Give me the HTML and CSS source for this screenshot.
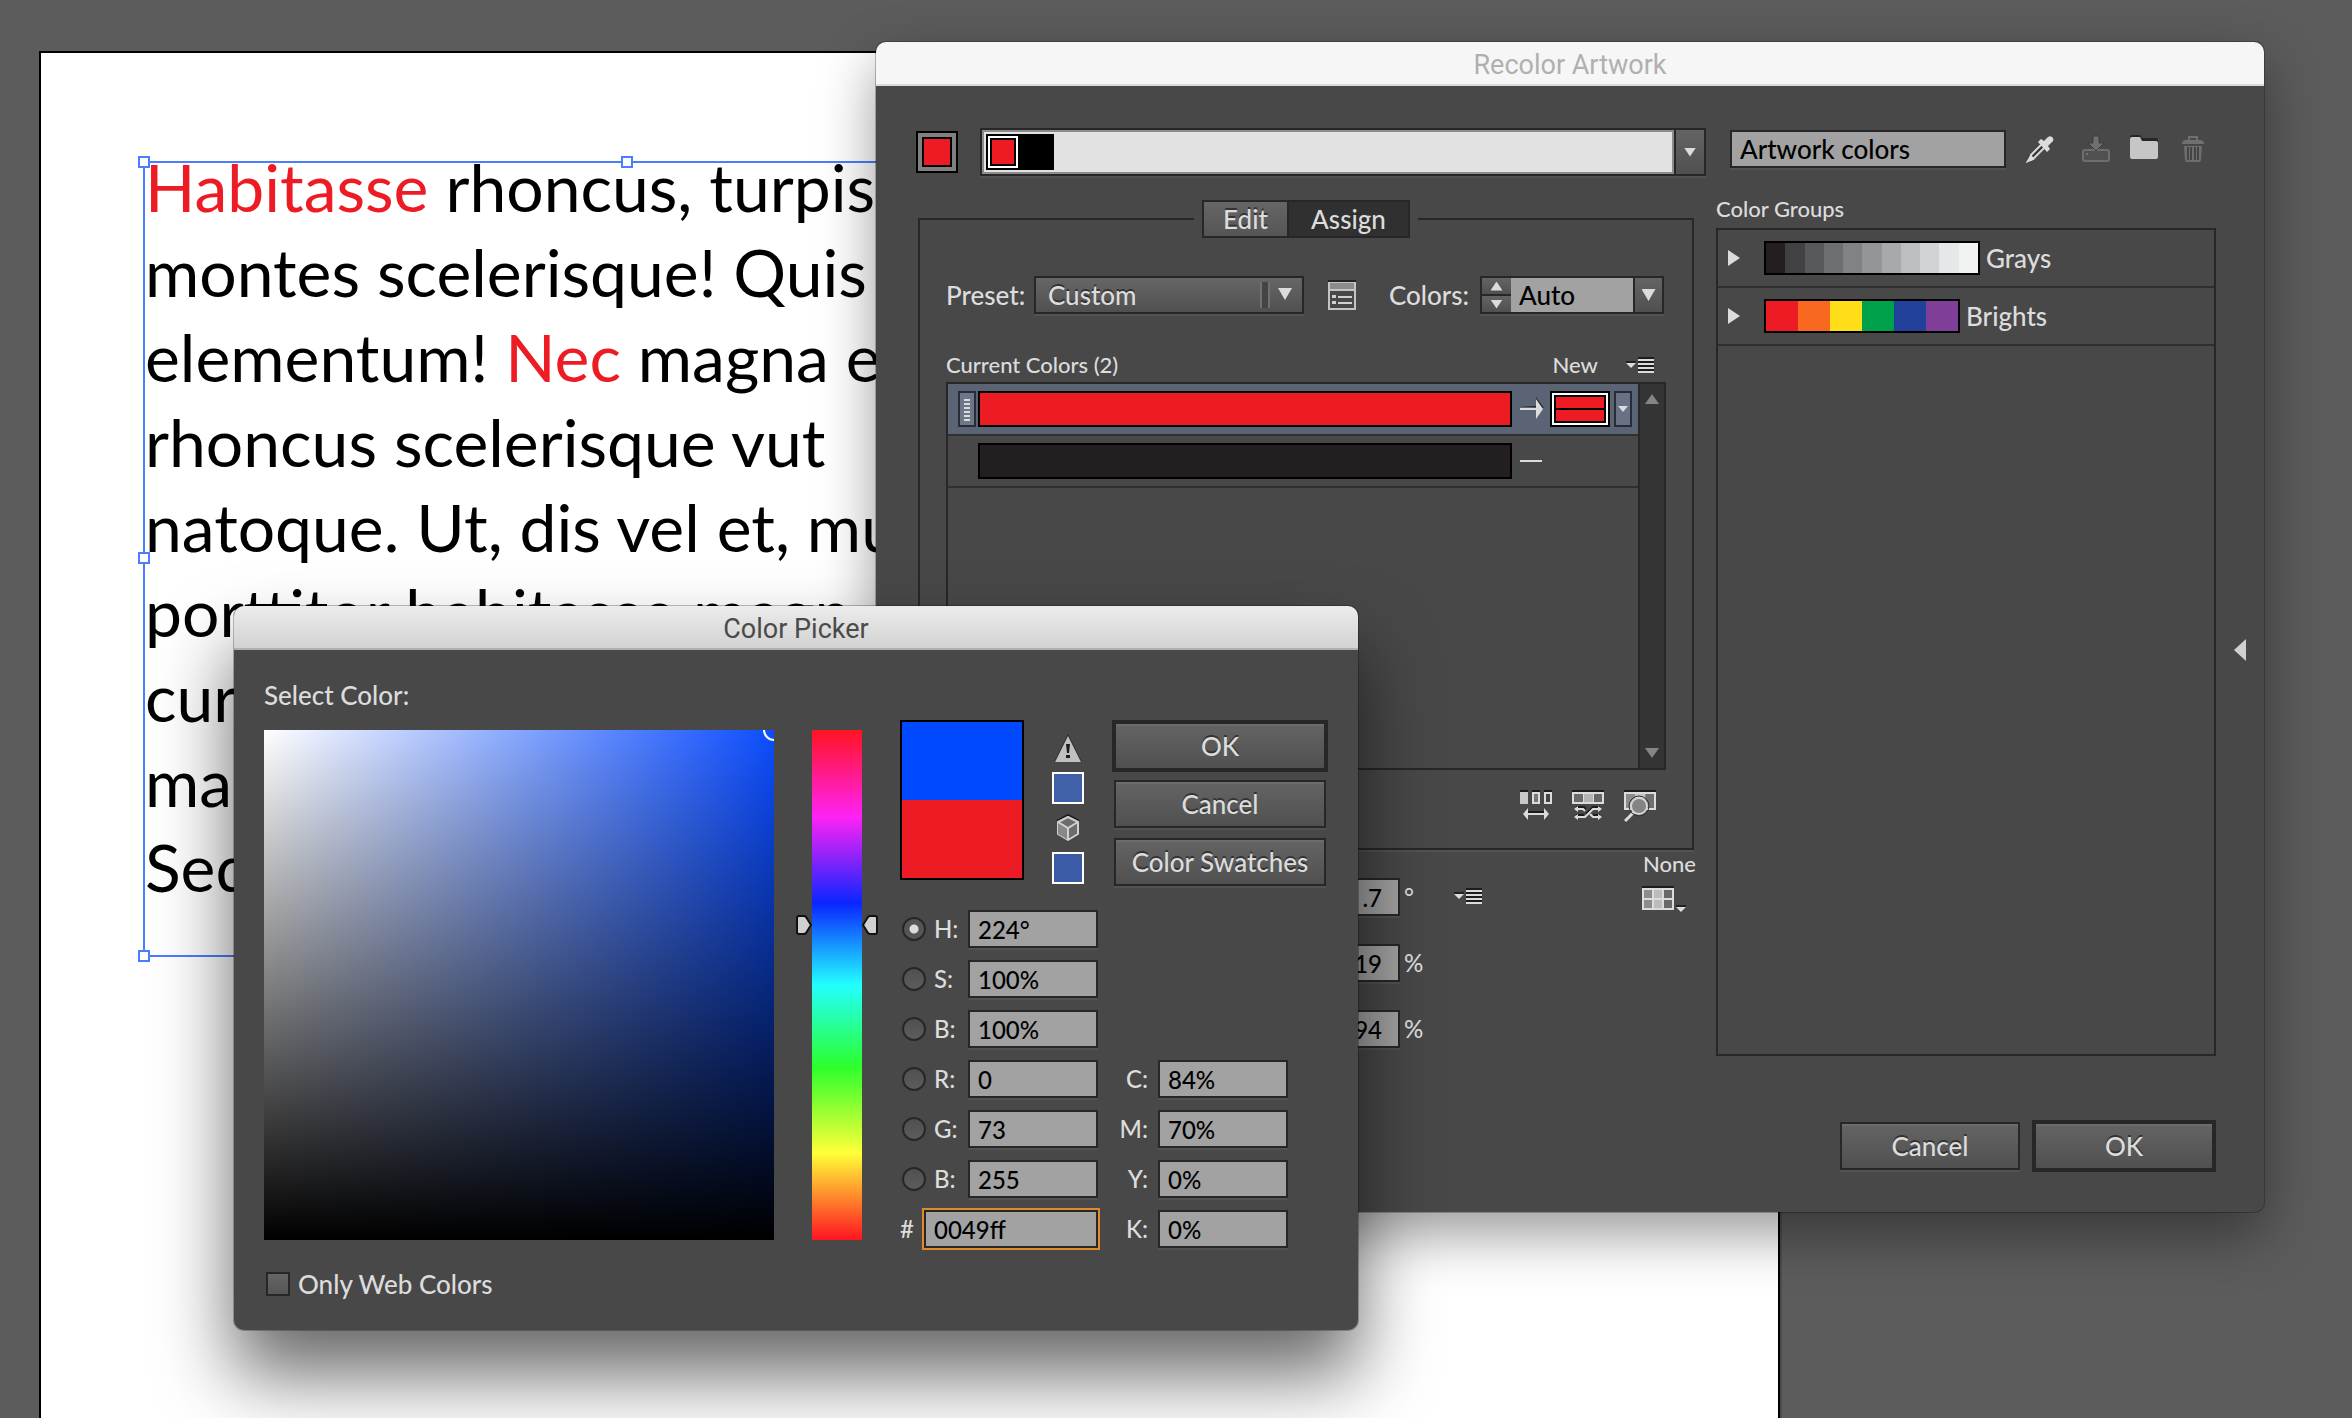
FILE: index.html
```html
<!DOCTYPE html>
<html lang="en">
<head>
    <meta charset="UTF-8">
    <meta name="viewport" content="width=device-width, initial-scale=1.0">
    <title>Recolor Artwork</title>
    <link rel="stylesheet" href="styles.css">
</head>
<body>
    <main class="workspace">
        <div class="artboard"></div>
        <div class="text-frame">
            <p><span class="red">Habitasse</span> rhoncus, turpis<br>
            montes scelerisque! Quis<br>
            elementum! <span class="red">Nec</span> magna e<br>
            rhoncus scelerisque vut<br>
            natoque. Ut, dis vel et, mu<br>
            porttitor habitasse magn<br>
            cur<br>
            ma<br>
            Sed</p>
            <i class="handle top-left"></i>
            <i class="handle top-mid"></i>
            <i class="handle mid-left"></i>
            <i class="handle bottom-left"></i>
        </div>

        <!-- Recolor Artwork -->
        <section class="window recolor">
            <h2 class="titlebar">Recolor Artwork</h2>
            <div class="recolor-body">
                <div class="left-col">
                    <div class="active-row">
                        <button class="base-color" aria-label="Base color"><span></span></button>
                        <div class="color-bar">
                            <div class="bar-track">
                                <span class="chip chip-active"></span><span class="chip"></span>
                            </div>
                            <button class="bar-btn" aria-label="Harmony rules"><i class="tri-down small"></i></button>
                        </div>
                    </div>

                    <fieldset class="assign">
                        <legend>
                            <span class="tabs">
                                <button class="tab">Edit</button><button class="tab active">Assign</button>
                            </span>
                        </legend>
                        <div class="preset-row">
                            <label class="preset-label" for="preset">Preset:</label>
                            <span class="select-wrap">
                                <select id="preset"><option>Custom</option></select>
                            </span>
                            <button class="icon-btn preset-options" aria-label="Preset options">
                                <svg width="28" height="30" viewBox="0 0 28 30">
                                    <path d="M0 0h28v2H0z" fill="#222"/>
                                    <path d="M1 3h26v26H1z" fill="#484848" stroke="#c4c4c4" stroke-width="2"/>
                                    <path d="M2 3h24v6H2z" fill="#8c8c8c"/>
                                    <path d="M1 10h26" stroke="#c4c4c4" stroke-width="2"/>
                                    <path d="M4 15h4v3H4zM4 21h4v3H4zM10 16h14v2H10zM10 22h14v2H10z" fill="#d0d0d0"/>
                                </svg>
                            </button>
                            <label class="colors-label" for="colors">Colors:</label>
                            <span class="stepper">
                                <span class="steps">
                                    <button aria-label="More"><i class="tri-up"></i></button>
                                    <button aria-label="Fewer"><i class="tri-down small"></i></button>
                                </span>
                                <input type="text" id="colors" value="Auto">
                                <button class="drop" aria-label="Color count"><i class="tri-down big"></i></button>
                            </span>
                        </div>

                        <div class="list-head">
                            <span>Current Colors (2)</span>
                            <span class="new-label">New</span>
                            <button class="icon-btn" aria-label="Column menu">
                                <svg width="28" height="16" viewBox="0 0 28 16">
                                    <path d="M0 4h10v2H0z" fill="#222"/><path d="M0 6h10l-5 5z" fill="#dcdcdc"/>
                                    <path d="M12 0h16v2H12zM12 4h16v2H12zM12 8h16v2H12zM12 12h16v2H12z" fill="#1c1c1c"/>
                                    <path d="M12 2h16v2H12zM12 6h16v2H12zM12 10h16v2H12zM12 14h16v2H12z" fill="#dcdcdc"/>
                                </svg>
                            </button>
                        </div>
                        <div class="color-list">
                            <div class="rows">
                                <div class="row selected">
                                    <span class="grip"><i></i></span>
                                    <span class="current red-fill"></span>
                                    <svg class="arrow" width="24" height="24" viewBox="0 0 24 24">
                                        <path d="M0 9h16V0l8 11" fill="#222b38"/>
                                        <path d="M0 11h16V2l7 10-7 10v-9H0z" fill="#dcdcdc"/>
                                    </svg>
                                    <span class="new-color"><i></i><i></i></span>
                                    <button class="new-drop" aria-label="Colorization method"><i class="tri-down tiny"></i></button>
                                </div>
                                <div class="row">
                                    <span class="current black-fill"></span>
                                    <svg class="arrow" width="24" height="24" viewBox="0 0 24 24">
                                        <path d="M0 11h22v2H0z" fill="#dcdcdc"/>
                                    </svg>
                                </div>
                            </div>
                            <div class="scrollbar">
                                <i class="scroll-up"></i>
                                <i class="scroll-down"></i>
                            </div>
                        </div>

                        <div class="tools">
                            <button class="icon-btn" aria-label="Change order randomly">
                                <svg width="32" height="32" viewBox="0 0 32 32">
                                    <path d="M0 0h8v2H0zM12 0h8v2h-8zM24 0h8v2h-8z" fill="#1c1c1c"/>
                                    <path d="M0 2h8v12H0z" fill="#c8c8c8"/>
                                    <path d="M13 3h6v10h-6z" fill="#777" stroke="#dcdcdc" stroke-width="2"/>
                                    <path d="M25 3h6v10h-6z" fill="#444" stroke="#dcdcdc" stroke-width="2"/>
                                    <path d="M8 22h16" stroke="#1c1c1c" stroke-width="2"/>
                                    <path d="M3 24l5-6v5h16v-5l5 6-5 6v-5H8v5z" fill="#dcdcdc"/>
                                </svg>
                            </button>
                            <button class="icon-btn" aria-label="Change saturation randomly">
                                <svg width="32" height="32" viewBox="0 0 32 32">
                                    <path d="M0 0h32v2H0z" fill="#1c1c1c"/>
                                    <path d="M0 2h32v12H0z" fill="#dcdcdc"/>
                                    <path d="M2 4h9v8H2z" fill="#6a6a6a"/><path d="M12 4h9v8h-9z" fill="#b4b4b4"/><path d="M22 4h8v8h-8z" fill="#666"/>
                                    <path d="M4 17h8l2 2M28 17h-7l-7 7M4 25h8M28 25h-7" fill="none" stroke="#1c1c1c" stroke-width="2"/>
                                    <path d="M4 19h7l2 2M28 19h-7l-8 8H4M28 27h-7l-3-3" fill="none" stroke="#dcdcdc" stroke-width="2"/>
                                    <path d="M2 19l4-3v6zM2 27l4-3v6zM30 19l-4-3v6zM30 27l-4-3v6z" fill="#dcdcdc"/>
                                </svg>
                            </button>
                            <button class="icon-btn" aria-label="Find color">
                                <svg width="32" height="32" viewBox="0 0 32 32">
                                    <path d="M0 0h32v2H0z" fill="#1c1c1c"/>
                                    <path d="M1 3h30v16H1z" fill="#8c8c8c" stroke="#dcdcdc" stroke-width="2"/>
                                    <path d="M11 4h10v8H11z" fill="#c4c4c4"/>
                                    <path d="M22 4h8v14h-8z" fill="#707070"/>
                                    <path d="M10 22l-9 9" stroke="#dcdcdc" stroke-width="3"/>
                                    <circle cx="15" cy="16" r="10" fill="none" stroke="#333" stroke-width="1"/>
                                    <circle cx="15" cy="16" r="8" fill="#848484" stroke="#d4d4d4" stroke-width="2"/>
                                </svg>
                            </button>
                        </div>
                    </fieldset>

                    <div class="adjust">
                        <div class="adjust-fields">
                            <label><input type="text" value=".7"> °</label>
                            <label><input type="text" value="19"> %</label>
                            <label><input type="text" value="94"> %</label>
                        </div>
                        <button class="icon-btn adjust-menu" aria-label="Color mode">
                            <svg width="28" height="16" viewBox="0 0 28 16">
                                <path d="M0 4h10v2H0z" fill="#222"/><path d="M0 6h10l-5 5z" fill="#dcdcdc"/>
                                <path d="M12 0h16v2H12zM12 4h16v2H12zM12 8h16v2H12zM12 12h16v2H12z" fill="#1c1c1c"/>
                                <path d="M12 2h16v2H12zM12 6h16v2H12zM12 10h16v2H12zM12 14h16v2H12z" fill="#dcdcdc"/>
                            </svg>
                        </button>
                        <div class="limit">
                            <span>None</span>
                            <button class="icon-btn" aria-label="Limit to swatch library">
                                <svg width="46" height="26" viewBox="0 0 46 26">
                                    <path d="M0 0h32v2H0z" fill="#1c1c1c"/>
                                    <path d="M0 2h32v22H0z" fill="#dcdcdc"/>
                                    <path d="M2 4h8v8H2zM2 14h8v8H2z" fill="#8c8c8c"/>
                                    <path d="M12 4h8v8h-8zM12 14h8v8h-8z" fill="#bcbcbc"/>
                                    <path d="M22 4h8v8h-8zM22 14h8v8h-8z" fill="#686868"/>
                                    <path d="M34 19h10v2H34z" fill="#222"/><path d="M34 21h10l-5 5z" fill="#dcdcdc"/>
                                </svg>
                            </button>
                        </div>
                    </div>
                </div>

                <div class="right-col">
                    <div class="group-bar">
                        <input type="text" class="group-name" value="Artwork colors" aria-label="Color group name">
                        <button class="icon-btn eyedropper" aria-label="Get colors from selected art">
                            <svg width="28" height="28" viewBox="0 0 28 28">
                                <path d="M4 25l1-5L16 9l3 3L8 23z" fill="#333" stroke="#d8d8d8" stroke-width="2" stroke-linejoin="round"/>
                                <path d="M12 7l3-3 3 2 4-4q3-2 5 1 1 3-1 4l-4 4 2 3-3 3z" fill="#dcdcdc"/>
                                <path d="M2 26l3-5 2 3z" fill="#dcdcdc" stroke="#dcdcdc" stroke-width="2"/>
                            </svg>
                        </button>
                        <button class="icon-btn" aria-label="Save changes" disabled>
                            <svg width="28" height="28" viewBox="0 0 28 28">
                                <rect x="1" y="15" width="26" height="11" rx="2" fill="#505050" stroke="#6e6e6e" stroke-width="2"/>
                                <circle cx="5" cy="19" r="1" fill="#7c7c7c"/>
                                <path d="M11 1h6v7h5l-8 8-8-8h5z" fill="#707070" stroke="#3c3c3c"/>
                            </svg>
                        </button>
                        <button class="icon-btn" aria-label="New color group">
                            <svg width="28" height="28" viewBox="0 0 28 28">
                                <path d="M0 2q0-2 2-2h8l2 3h14q2 0 2 2v2H0z" fill="#262626"/>
                                <path d="M0 4q0-2 2-2h8l2 4h14q2 0 2 2v14q0 2-2 2H2q-2 0-2-2z" fill="#c6c6c6"/>
                            </svg>
                        </button>
                        <button class="icon-btn" aria-label="Delete color group" disabled>
                            <svg width="28" height="28" viewBox="-3 0 28 28">
                                <path d="M8 5V2h8v3" fill="none" stroke="#707070" stroke-width="2"/>
                                <path d="M1 9q0-4 4-4h14q4 0 4 4z" fill="#707070"/>
                                <path d="M3 11h18l-1 14q0 2-2 2H6q-2 0-2-2z" fill="#6e6e6e"/>
                                <path d="M7 12v13M10 12v13M14 12v13M17 12v13" stroke="#444" stroke-width="2"/>
                            </svg>
                        </button>
                    </div>
                    <h3>Color Groups</h3>
                    <ul class="groups">
                        <li>
                            <i class="tri-right"></i>
                            <span class="strip grays"><i></i><i></i><i></i><i></i><i></i><i></i><i></i><i></i><i></i><i></i><i></i></span>
                            Grays
                        </li>
                        <li>
                            <i class="tri-right"></i>
                            <span class="strip brights"><i></i><i></i><i></i><i></i><i></i><i></i></span>
                            Brights
                        </li>
                    </ul>
                    <div class="actions">
                        <button class="btn">Cancel</button>
                        <button class="btn default">OK</button>
                    </div>
                </div>

                <button class="icon-btn collapse" aria-label="Hide color groups">
                    <svg width="12" height="22" viewBox="0 0 12 22"><path d="M12 0v22L0 11z" fill="#d0d0d0"/></svg>
                </button>
            </div>
        </section>

        <!-- Color Picker -->
        <section class="window picker">
            <h2 class="titlebar">Color Picker</h2>
            <div class="picker-body">
                <div class="field-col">
                    <h3>Select Color:</h3>
                    <div class="field"><i class="field-cursor"></i></div>
                    <label class="web-only"><input type="checkbox"> Only Web Colors</label>
                </div>

                <div class="hue">
                    <div class="hue-strip"></div>
                    <svg class="hue-mark left" width="16" height="20" viewBox="0 0 16 20">
                        <path d="M3 1h5q1 0 2 1l5 8-5 8q-1 1-2 1H3q-2 0-2-2V3q0-2 2-2z" fill="#d0d0d0" stroke="#111" stroke-width="2"/>
                    </svg>
                    <svg class="hue-mark right" width="16" height="20" viewBox="0 0 16 20">
                        <path d="M13 1H8Q7 1 6 2L1 10l5 8q1 1 2 1h5q2 0 2-2V3q0-2-2-2z" fill="#d0d0d0" stroke="#111" stroke-width="2"/>
                    </svg>
                </div>

                <div class="values-col">
                    <div class="picker-top">
                        <div class="compare"><i class="after"></i><i class="before"></i></div>
                        <div class="warnings">
                            <svg width="28" height="28" viewBox="0 0 28 28">
                                <path d="M14 0L0 28h28z" fill="#2a2a2a"/>
                                <path d="M14 2L1 28h26z" fill="#c0c0c0"/>
                                <path d="M12 10h4l-1 9h-2zM12 21h4v3h-4z" fill="#1c1c1c"/>
                            </svg>
                            <button class="safe gamut" aria-label="In-gamut color"></button>
                            <svg class="cube" width="24" height="28" viewBox="0 0 24 28">
                                <path d="M1 7l11-6 11 6" fill="none" stroke="#1c1c1c" stroke-width="2"/>
                                <path d="M2 8l10-5 10 5v12l-10 6-10-6z" fill="#6c6c6c" stroke="#d0d0d0" stroke-width="2" stroke-linejoin="round"/>
                                <path d="M2 8l10 6v12L2 20z" fill="#888"/>
                                <path d="M2 8l10 6 10-6M12 14v12" fill="none" stroke="#d0d0d0" stroke-width="2"/>
                            </svg>
                            <button class="safe" aria-label="Web safe color"></button>
                        </div>
                        <div class="picker-actions">
                            <button class="btn default">OK</button>
                            <button class="btn">Cancel</button>
                            <button class="btn">Color Swatches</button>
                        </div>
                    </div>

                    <div class="values">
                        <div class="value-list">
                            <div class="value"><input type="radio" name="axis" id="axis-h" checked><label for="axis-h">H:</label><input type="text" value="224°" aria-label="Hue"></div>
                            <div class="value"><input type="radio" name="axis" id="axis-s"><label for="axis-s">S:</label><input type="text" value="100%" aria-label="Saturation"></div>
                            <div class="value"><input type="radio" name="axis" id="axis-v"><label for="axis-v">B:</label><input type="text" value="100%" aria-label="Brightness"></div>
                            <div class="value"><input type="radio" name="axis" id="axis-r"><label for="axis-r">R:</label><input type="text" value="0" aria-label="Red"></div>
                            <div class="value"><input type="radio" name="axis" id="axis-g"><label for="axis-g">G:</label><input type="text" value="73" aria-label="Green"></div>
                            <div class="value"><input type="radio" name="axis" id="axis-b"><label for="axis-b">B:</label><input type="text" value="255" aria-label="Blue"></div>
                            <div class="value hex"><label for="hex">#</label><input type="text" id="hex" value="0049ff"></div>
                        </div>
                        <div class="value-list cmyk">
                            <div class="value"><label for="cyan">C:</label><input type="text" id="cyan" value="84%"></div>
                            <div class="value"><label for="magenta">M:</label><input type="text" id="magenta" value="70%"></div>
                            <div class="value"><label for="yellow">Y:</label><input type="text" id="yellow" value="0%"></div>
                            <div class="value"><label for="black">K:</label><input type="text" id="black" value="0%"></div>
                        </div>
                    </div>
                </div>
            </div>
        </section>
    </main>
</body>
</html>
```

FILE: styles.css
```css
*{
    box-sizing: border-box;
    margin: 0px;
    padding: 0px;
}
body{
    background: #5c5c5c;
    color: #dcdcdc;
    font: 500 26px/30px Lato, "Open Sans", sans-serif;
}
button, input, select{
    font: inherit;
    color: inherit;
}
h3{
    font-size: inherit;
    font-weight: 500;
}
svg, i{
    display: block;
    flex: none;
}
ul{
    list-style: none;
}
.workspace{
    position: relative;
    height: 100vh;
    overflow: hidden;
}

/* document */
.artboard{
    position: absolute;
    top: 51px;
    left: 39px;
    right: 572px;
    bottom: -2px;
    background: #fff;
    border: 2px solid #000;
    box-shadow: 2px 2px 0 #4c4c4c;
}
.text-frame{
    position: absolute;
    top: 161px;
    left: 143px;
    width: 966px;
    height: 796px;
    border: 2px solid #4a7dff;
    color: #000;
    font-size: 66px;
    font-weight: 400;
    line-height: 85px;
    white-space: nowrap;
}
.text-frame p{
    margin-top: -19px;
}
.red{
    color: #ed1c24;
}
.handle{
    position: absolute;
    width: 12px;
    height: 12px;
    background: #fff;
    border: 2px solid #4a7dff;
}
.top-left{
    top: -7px;
    left: -7px;
}
.top-mid{
    top: -7px;
    left: 476px;
}
.mid-left{
    top: 389px;
    left: -7px;
}
.bottom-left{
    bottom: -7px;
    left: -7px;
}

/* windows */
.window{
    position: absolute;
    background: #484848;
    border-radius: 10px;
}
.titlebar{
    height: 44px;
    border-radius: 10px 10px 0 0;
    border-bottom: 2px solid #dcdcdc;
    background: #f6f6f6;
    color: #b0b0b0;
    font: 27px/46px Roboto, sans-serif;
    text-align: center;
}
.recolor{
    top: 42px;
    left: 876px;
    right: 88px;
    box-shadow: 0 0 0 1px rgba(0, 0, 0, .25), 0 22px 56px rgba(0, 0, 0, .4);
}
.picker{
    top: 606px;
    left: 234px;
    box-shadow: 0 0 0 1px rgba(0, 0, 0, .25), 0 44px 76px rgba(0, 0, 0, .6);
}
.picker .titlebar{
    background: linear-gradient(#ececec, #d2d2d2);
    border-bottom-color: #b0b0b0;
    color: #4a4a4a;
}

/* shared controls */
input[type="text"]{
    height: 38px;
    padding: 0 8px;
    background: #a2a2a2;
    border: 2px solid #272727;
    box-shadow: 0 2px 0 #525252;
    color: #000;
    outline: none;
}
.btn{
    height: 48px;
    background: linear-gradient(#646464, #505050);
    border: 2px solid #272727;
    box-shadow: inset 0 2px 0 #6c6c6c, 0 2px 0 #525252;
    text-shadow: 0 -2px 0 #333;
}
.btn.default{
    height: 52px;
    border-width: 4px;
    box-shadow: inset 0 2px 0 #6c6c6c;
}
.icon-btn{
    background: none;
    border: none;
    flex: none;
}
.tri-down{
    width: 12px;
    height: 10px;
    background: #dcdcdc;
    clip-path: polygon(0 0, 100% 0, 50% 100%);
}
.tri-down.tiny{
    width: 10px;
    height: 6px;
}
.tri-down.small{
    height: 9px;
}
.tri-down.big{
    width: 14px;
    height: 12px;
}
.tri-up{
    width: 12px;
    height: 9px;
    background: #dcdcdc;
    clip-path: polygon(0 100%, 100% 100%, 50% 0);
}
.tri-right{
    width: 12px;
    height: 16px;
    background: #dcdcdc;
    clip-path: polygon(0 0, 100% 50%, 0 100%);
}

/* recolor artwork */
.recolor-body{
    display: grid;
    grid-template-columns: minmax(0, 1fr) 500px 20px;
    column-gap: 10px;
    padding: 42px 18px 40px 40px;
}
.active-row{
    display: flex;
    align-items: center;
    gap: 22px;
}
.base-color{
    width: 42px;
    height: 42px;
    padding: 4px;
    background: #808080;
    border: 2px solid #000;
}
.base-color span{
    display: block;
    height: 30px;
    background: #ed1c24;
    border: 2px solid #000;
}
.color-bar{
    flex: 1;
    display: flex;
    height: 48px;
    border: 2px solid #272727;
    box-shadow: 0 2px 0 #525252;
}
.bar-track{
    flex: 1;
    display: flex;
    padding: 2px;
    background: #e2e2e2;
    border: 2px solid #8c8c8c;
}
.chip{
    width: 34px;
    height: 36px;
    background: #000;
}
.chip-active{
    padding: 4px;
    background: #ed1c24 content-box;
    border: 2px solid #000;
    box-shadow: inset 0 0 0 2px #fff, inset 0 0 0 4px #000;
}
.bar-btn{
    width: 30px;
    padding-left: 8px;
    background: linear-gradient(#646464, #505050);
    border: none;
    border-left: 2px solid #272727;
}
.assign{
    margin: 24px 12px 0 2px;
    padding: 38px 26px 26px;
    border: 2px solid #272727;
    box-shadow: 0 2px 0 #525252;
}
.assign legend{
    margin: 0 auto;
    padding: 0 8px;
}
.tabs{
    display: flex;
    border: 2px solid #272727;
}
.tab{
    height: 34px;
    width: 85px;
    background: linear-gradient(#666, #555);
    border: none;
    border-right: 2px solid #272727;
    text-shadow: 0 -2px 0 #333;
}
.tab.active{
    width: 119px;
    background: #303030;
    border-right: none;
}
.preset-row{
    display: flex;
    align-items: center;
    padding-right: 2px;
}
.preset-label{
    width: 88px;
}
.select-wrap{
    position: relative;
    width: 270px;
}
.select-wrap select{
    display: block;
    width: 100%;
    height: 38px;
    padding: 0 12px;
    appearance: none;
    background: linear-gradient(#666, #505050);
    border: 2px solid #272727;
    border-radius: 0;
    box-shadow: 0 2px 0 #525252;
    text-shadow: 0 -2px 0 #333;
}
.select-wrap::before{
    content: "";
    position: absolute;
    top: 6px;
    right: 34px;
    width: 6px;
    height: 26px;
    border: 2px solid #707070;
    border-width: 0 2px;
    background: #444;
}
.select-wrap::after{
    content: "";
    position: absolute;
    top: 12px;
    right: 12px;
    width: 14px;
    height: 12px;
    background: #dcdcdc;
    clip-path: polygon(0 0, 100% 0, 50% 100%);
}
.preset-options{
    margin-left: 24px;
}
.colors-label{
    margin-left: auto;
    width: 91px;
}
.stepper{
    display: flex;
    width: 184px;
    height: 38px;
    border: 2px solid #272727;
    box-shadow: 0 2px 0 #525252;
}
.steps{
    display: flex;
    flex-direction: column;
    width: 29px;
}
.steps button, .drop{
    flex: 1;
    display: flex;
    align-items: center;
    justify-content: center;
    background: linear-gradient(#646464, #505050);
    border: none;
}
.steps button + button{
    border-top: 2px solid #272727;
}
.stepper input[type="text"]{
    width: 122px;
    height: 34px;
    border: none;
    box-shadow: none;
}
.drop{
    border-left: 2px solid #272727;
}
.list-head{
    display: flex;
    align-items: center;
    margin: 36px 0 2px;
    padding-right: 12px;
    font-size: 22px;
}
.new-label{
    margin-left: auto;
    margin-right: 28px;
}
.color-list{
    display: flex;
    min-height: 388px;
    border: 2px solid #272727;
}
.rows{
    flex: 1;
}
.row{
    display: flex;
    align-items: center;
    height: 52px;
    padding: 0 6px 0 30px;
    border-bottom: 2px solid #303030;
}
.row.selected{
    padding-left: 10px;
    background: #5a6474;
}
.grip{
    width: 18px;
    height: 36px;
    margin-right: 2px;
    padding: 6px 4px;
    background: #6e7788;
    border: 2px solid #272c36;
}
.grip i{
    height: 22px;
    width: 6px;
    background: repeating-linear-gradient(#dcdcdc 0 2px, transparent 2px 4px);
}
.current{
    flex: 1;
    height: 36px;
    border: 2px solid #000;
}
.red-fill{
    background: #ed1c24;
}
.black-fill{
    background: #231f20;
}
.row .arrow{
    margin: 0 6px 0 8px;
}
.row:last-child .arrow{
    margin-right: 88px;
}
.new-color{
    display: flex;
    flex-direction: column;
    gap: 2px;
    width: 60px;
    height: 36px;
    background: #000;
    border: 2px solid #000;
    box-shadow: inset 0 0 0 2px #fff;
    padding: 4px;
}
.new-color i{
    flex: 1;
    background: #ed1c24;
}
.new-drop{
    width: 18px;
    height: 36px;
    margin-left: 4px;
    padding-left: 2px;
    background: #687284;
    border: 2px solid #272c36;
}
.scrollbar{
    display: flex;
    flex-direction: column;
    justify-content: space-between;
    align-items: center;
    width: 26px;
    padding: 10px 4px;
    background: #343434;
    border-left: 2px solid #272727;
}
.scroll-up, .scroll-down{
    width: 14px;
    height: 10px;
    background: #858585;
}
.scroll-up{
    clip-path: polygon(0 100%, 100% 100%, 50% 0);
}
.scroll-down{
    clip-path: polygon(0 0, 100% 0, 50% 100%);
}
.tools{
    display: flex;
    justify-content: flex-end;
    gap: 20px;
    margin-top: 20px;
    padding-right: 10px;
}
.adjust{
    display: flex;
    justify-content: flex-end;
    margin-right: 10px;
}
.adjust-fields{
    display: flex;
    flex-direction: column;
    gap: 28px;
    padding-top: 28px;
}
.adjust-fields label{
    display: flex;
    align-items: center;
    gap: 4px;
    width: 124px;
    font-size: 24px;
}
.adjust-fields input{
    width: 100px;
    padding-right: 16px;
    text-align: right;
}
.adjust-menu{
    align-self: flex-start;
    margin: 38px 160px 0 30px;
}
.limit{
    width: 54px;
    font-size: 22px;
    line-height: 28px;
    text-align: right;
}
.limit .icon-btn{
    display: block;
    margin-top: 8px;
}
.right-col{
    display: flex;
    flex-direction: column;
}
.group-bar{
    display: flex;
    align-items: center;
    gap: 20px;
    padding: 2px 0 0 14px;
}
.group-name{
    width: 276px;
}
.eyedropper{
    margin-right: 8px;
}
.right-col h3{
    margin-top: 26px;
    margin-bottom: 4px;
    font-size: 22px;
}
.groups{
    min-height: 828px;
    border: 2px solid #272727;
}
.groups li{
    display: flex;
    align-items: center;
    height: 58px;
    padding-left: 10px;
    border-bottom: 2px solid #303030;
}
.strip{
    display: flex;
    width: 216px;
    height: 34px;
    margin: 0 6px 0 24px;
    border: 2px solid #000;
}
.strip i{
    flex: 1;
}
.brights{
    width: 196px;
}
.grays i:nth-child(1){ background: #231f20; }
.grays i:nth-child(2){ background: #414042; }
.grays i:nth-child(3){ background: #58595b; }
.grays i:nth-child(4){ background: #6d6e71; }
.grays i:nth-child(5){ background: #808285; }
.grays i:nth-child(6){ background: #939598; }
.grays i:nth-child(7){ background: #a7a9ac; }
.grays i:nth-child(8){ background: #bcbec0; }
.grays i:nth-child(9){ background: #d1d3d4; }
.grays i:nth-child(10){ background: #e6e7e8; }
.grays i:nth-child(11){ background: #f1f2f2; }
.brights i:nth-child(1){ background: #ed1c24; }
.brights i:nth-child(2){ background: #f9681f; }
.brights i:nth-child(3){ background: #ffde17; }
.brights i:nth-child(4){ background: #00a14b; }
.brights i:nth-child(5){ background: #21409a; }
.brights i:nth-child(6){ background: #7f3f98; }
.actions{
    display: flex;
    justify-content: flex-end;
    align-items: center;
    gap: 12px;
    margin-top: 64px;
}
.actions .btn{
    width: 180px;
}
.actions .btn.default{
    width: 184px;
}
.collapse{
    align-self: center;
    justify-self: end;
}

/* color picker */
.picker-body{
    display: flex;
    gap: 22px;
    padding: 30px 30px 34px;
}
.field{
    position: relative;
    width: 510px;
    height: 510px;
    margin: 20px 0 32px;
    overflow: hidden;
    background: linear-gradient(transparent, #000), linear-gradient(to right, #fff, #0c4dff);
}
.field-cursor{
    position: absolute;
    top: -11px;
    right: -11px;
    width: 22px;
    height: 22px;
    border: 2px solid #fff;
    border-radius: 50%;
}
.web-only{
    display: flex;
    align-items: center;
    gap: 8px;
    height: 24px;
    padding-left: 2px;
}
input[type="checkbox"]{
    appearance: none;
    width: 24px;
    height: 24px;
    background: linear-gradient(#666, #555);
    border: 2px solid #272727;
}
.hue{
    position: relative;
    padding: 50px 16px 0;
}
.hue-strip{
    width: 50px;
    height: 510px;
    background: linear-gradient(#ff1420, #ff22f5 17%, #0a25ff 34%, #22ffff 50%, #2cff2c 66%, #ffff38 83%, #ff1420);
}
.hue-mark{
    position: absolute;
    top: 235px;
}
.hue-mark.left{
    left: 0;
}
.hue-mark.right{
    right: 0;
}
.values-col{
    padding-top: 40px;
}
.picker-top{
    display: flex;
    gap: 28px;
}
.compare{
    display: flex;
    flex-direction: column;
    width: 124px;
    height: 160px;
    border: 2px solid #000;
}
.compare i{
    flex: 1;
}
.after{
    background: #0049ff;
}
.before{
    background: #ed1c24;
}
.warnings{
    display: flex;
    flex-direction: column;
    align-items: center;
    gap: 10px;
    width: 32px;
    padding-top: 14px;
}
.safe{
    width: 32px;
    height: 32px;
    background: #3c5ba6;
    border: 2px solid #fff;
}
.gamut{
    background: #4060a8;
}
.picker-actions{
    display: flex;
    flex-direction: column;
    gap: 10px;
    width: 216px;
}
.picker-actions .btn{
    margin: 0 2px;
}
.picker-actions .btn.default{
    margin: 0 0 -2px;
}
.values{
    display: flex;
    align-items: flex-end;
    gap: 14px;
    margin-top: 24px;
    font-size: 24px;
}
.value-list{
    display: flex;
    flex-direction: column;
    gap: 12px;
}
.value{
    display: flex;
    align-items: center;
}
input[type="radio"]{
    appearance: none;
    width: 24px;
    height: 24px;
    margin: 0 8px 0 2px;
    background: linear-gradient(#505050, #5c5c5c);
    border: 2px solid #272727;
    border-radius: 50%;
}
input[type="radio"]:checked{
    background: radial-gradient(circle, #dcdcdc 0 4px, #555 5px);
}
.value label{
    width: 34px;
}
.value input[type="text"]{
    width: 130px;
}
.value.hex label{
    width: 24px;
}
.value.hex input[type="text"]{
    width: 174px;
    outline: 2px solid #e08a2c;
}
.cmyk label{
    width: 36px;
    margin-right: 10px;
    text-align: right;
}
```
